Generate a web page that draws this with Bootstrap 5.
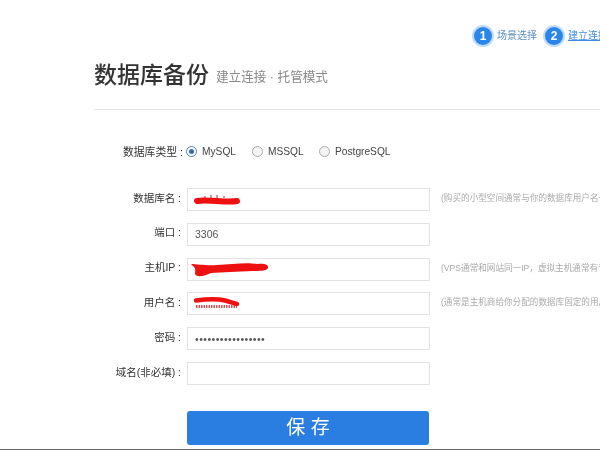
<!DOCTYPE html>
<html lang="zh">
<head>
<meta charset="utf-8">
<title>数据库备份</title>
<link href="https://cdn.jsdelivr.net/npm/bootstrap@5.3.0/dist/css/bootstrap.min.css" rel="stylesheet">
<style>
html,body{height:450px;overflow:hidden;background:#fff}
body{font-family:"Liberation Sans","Noto Sans CJK SC",sans-serif;color:#444;font-size:11px}
.pg{width:600px;height:450px;overflow:hidden;filter:blur(.5px);position:relative;border-bottom:1.5px solid #666}
.stepbar{height:49px;padding:27px 0 0 474px;white-space:nowrap;width:700px}
.stepnum{width:18px;height:18px;border-radius:50%;background:#2b86ea;color:#fff;font-size:12px;font-weight:700;line-height:18px;text-align:center;box-shadow:0 0 0 2px #bfdcf8;flex:none}
.steptxt{font-size:10px;color:#5a8fc8;margin:0 8px 0 5px;line-height:18px;width:40px;flex:none}
.steptxt.cur{color:#3d8ae0;text-decoration:underline}
.headline{margin-left:94px;height:61px;padding-top:10px;border-bottom:1px solid #e4e4e4;white-space:nowrap}
.headline h1{font-size:23px;font-weight:500;color:#333;margin:0;line-height:32px}
.headline span{font-size:12.6px;color:#888;margin-left:7px;line-height:32px;padding-top:2px}
.typerow{height:20px;margin-top:32px;padding-left:123px}
.typelab{width:63px;color:#333;white-space:nowrap;flex:none;font-size:10.8px}
.rad{width:11px;height:11px;border-radius:50%;border:1px solid #aaa;background:#f4f4f4;flex:none;display:flex;align-items:center;justify-content:center}
.rad.on{border-color:#4a7fc0;background:#fff}
.rad.on::after{content:"";width:5px;height:5px;border-radius:50%;background:#2f6db5}
.radtxt{font-size:10.2px;color:#444;margin-left:5px}
.radslot{flex:none;display:flex;align-items:center}
.fields{margin-top:26px;margin-bottom:26px}
.frow{height:23px;margin-bottom:11.8px;width:760px}
.flab{width:181px;margin-right:3px;padding-bottom:2px;text-align:right;flex:none;color:#333;white-space:nowrap;font-size:10.5px}
.fld{width:243px;height:23px;margin-left:3px;border:1px solid #e2e2e2;border-radius:0;font-size:10.5px;color:#555;padding:0 7px;box-shadow:none;flex:none;min-height:0}
.fld.pw{letter-spacing:.45px}
.fbox{position:relative;flex:none}
.scrib{position:absolute;left:3px;top:0;pointer-events:none}
.fhint{font-size:8.6px;color:#aaa;margin-left:11px;padding-bottom:2px;white-space:nowrap}
.savebtn{display:block;width:242px;height:34px;margin:0 0 0 187px;background:#2a7de1;border:0;border-radius:3px;color:#fff;font-size:19px;line-height:34px;padding:0}
.savebtn:hover{background:#2a7de1;color:#fff}
</style>
</head>
<body>
<div class="pg">
  <div class="stepbar d-flex align-items-start">
    <div class="stepnum">1</div><div class="steptxt">场景选择</div>
    <div class="stepnum">2</div><div class="steptxt cur">建立连接</div>
  </div>
  <div class="headline d-flex align-items-start">
    <h1>数据库备份</h1><span>建立连接 · 托管模式</span>
  </div>
  <form>
    <div class="typerow d-flex align-items-center">
      <div class="typelab">数据库类型 :</div>
      <div class="radslot" style="width:66px"><span class="rad on"></span><span class="radtxt">MySQL</span></div>
      <div class="radslot" style="width:67px"><span class="rad"></span><span class="radtxt">MSSQL</span></div>
      <div class="radslot"><span class="rad"></span><span class="radtxt">PostgreSQL</span></div>
    </div>
    <div class="fields">
      <div class="frow d-flex align-items-center">
        <div class="flab">数据库名 :</div>
        <div class="fbox"><input class="form-control fld" type="text" aria-label="数据库名">
          <svg class="scrib" width="70" height="23" viewBox="0 0 70 23"><path d="M18 8v2M24 7v3M30 7v3M37 8v2" stroke="#b55" stroke-width="1.2"/><path d="M10 13C20 11 40 15 50 13" fill="none" stroke="#ee1111" stroke-width="6" stroke-linecap="round"/></svg></div>
        <div class="fhint">(购买的小型空间通常与你的数据库用户名一致)</div>
      </div>
      <div class="frow d-flex align-items-center">
        <div class="flab">端口 :</div>
        <div class="fbox"><input class="form-control fld" type="text" value="3306" aria-label="端口"></div>
      </div>
      <div class="frow d-flex align-items-center">
        <div class="flab">主机IP :</div>
        <div class="fbox"><input class="form-control fld" type="text" aria-label="主机IP">
          <svg class="scrib" width="90" height="23" viewBox="0 0 90 23"><path d="M4 6C10 6 20 8 30 7C45 6 60 4 70 6C76 5 82 6 81 10C80 13 72 13 66 13C50 14 36 14 24 15C18 18 10 20 8 16C8 13 9 11 7 9Z" fill="#ee1111"/></svg></div>
        <div class="fhint">(VPS通常和网站同一IP，虚拟主机通常有专用地址)</div>
      </div>
      <div class="frow d-flex align-items-center">
        <div class="flab">用户名 :</div>
        <div class="fbox"><input class="form-control fld" type="text" aria-label="用户名">
          <svg class="scrib" width="70" height="23" viewBox="0 0 70 23"><path d="M9 14.5H50" stroke="#c55" stroke-width="3" stroke-dasharray="1.5 1"/><path d="M9 8.5C20 7 32 7 38 8.5S46 11 50 12" fill="none" stroke="#ee1111" stroke-width="4.5" stroke-linecap="round"/></svg></div>
        <div class="fhint">(通常是主机商给你分配的数据库固定的用户名)</div>
      </div>
      <div class="frow d-flex align-items-center">
        <div class="flab">密码 :</div>
        <div class="fbox"><input class="form-control fld pw" type="password" value="abcdefghijklmnopq" aria-label="密码"></div>
      </div>
      <div class="frow d-flex align-items-center">
        <div class="flab">域名(非必填) :</div>
        <div class="fbox"><input class="form-control fld" type="text" aria-label="域名"></div>
      </div>
    </div>
    <button type="button" class="btn savebtn">保 存</button>
  </form>
</div>
<script src="https://cdn.jsdelivr.net/npm/bootstrap@5.3.0/dist/js/bootstrap.bundle.min.js"></script>
</body>
</html>
